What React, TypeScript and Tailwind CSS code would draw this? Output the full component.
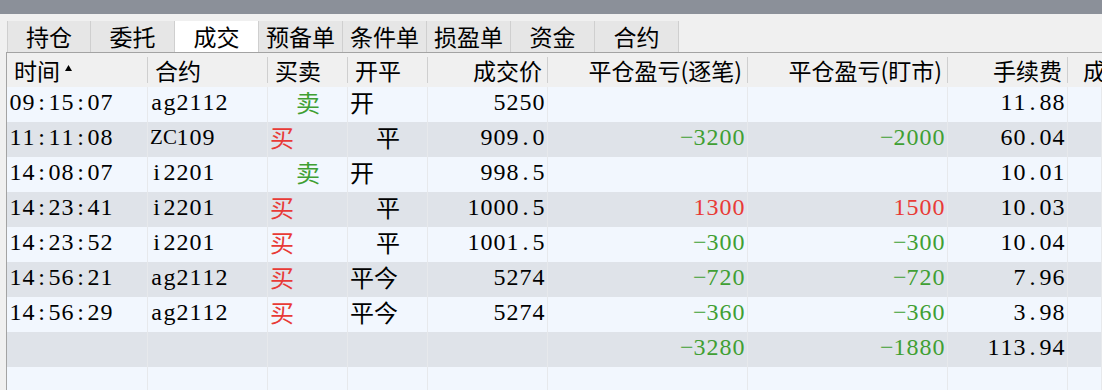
import React from 'react';

type Side = 'buy' | 'sell';

interface Trade {
  time: string;
  symbol: string;
  side: Side;
  offset: string;
  price: string;
  pnlTrade: string;
  pnlMarket: string;
  fee: string;
}

const TRADES: Trade[] = [
  { time: '09:15:07', symbol: 'ag2112', side: 'sell', offset: '开', price: '5250', pnlTrade: '', pnlMarket: '', fee: '11.88' },
  { time: '11:11:08', symbol: 'ZC109', side: 'buy', offset: '  平', price: '909.0', pnlTrade: '-3200', pnlMarket: '-2000', fee: '60.04' },
  { time: '14:08:07', symbol: 'i2201', side: 'sell', offset: '开', price: '998.5', pnlTrade: '', pnlMarket: '', fee: '10.01' },
  { time: '14:23:41', symbol: 'i2201', side: 'buy', offset: '  平', price: '1000.5', pnlTrade: '1300', pnlMarket: '1500', fee: '10.03' },
  { time: '14:23:52', symbol: 'i2201', side: 'buy', offset: '  平', price: '1001.5', pnlTrade: '-300', pnlMarket: '-300', fee: '10.04' },
  { time: '14:56:21', symbol: 'ag2112', side: 'buy', offset: '平今', price: '5274', pnlTrade: '-720', pnlMarket: '-720', fee: '7.96' },
  { time: '14:56:29', symbol: 'ag2112', side: 'buy', offset: '平今', price: '5274', pnlTrade: '-360', pnlMarket: '-360', fee: '3.98' },
];

const TABS = ['持仓', '委托', '成交', '预备单', '条件单', '损盈单', '资金', '合约'];
const ACTIVE_TAB = '成交';

const GRID = 'grid grid-cols-[141px_120px_80px_80px_120px_200px_200px_120px_1fr]';

// half-width glyphs sit in fixed cells, like the terminal's monospace font
function Txt({ s }: { s: string }) {
  return (
    <>
      {Array.from(s).map((c, i) => {
        if (c.charCodeAt(0) >= 128 || c === '(' || c === ')') return <span key={i}>{c}</span>;
        const upper = c >= 'A' && c <= 'Z';
        return (
          <span
            key={i}
            className={`inline-block w-[13px] text-center font-['Liberation_Serif',serif] ${upper ? 'text-[21px]' : 'text-[24px]'}`}
          >
            {c === '-' ? '−' : c === ' ' ? '\u00a0' : c}
          </span>
        );
      })}
    </>
  );
}

function pnlColor(v: string) {
  if (!v) return 'text-black';
  return v.startsWith('-') ? 'text-[#3f9f33]' : 'text-[#e83a36]';
}

function HeadCell({ label, right, sort }: { label: string; right?: boolean; sort?: boolean }) {
  return (
    <div className="h-[34px] py-[4px]">
      <div
        className={`h-full border-r border-[#cfcfcf] flex items-center px-[7px] leading-none whitespace-nowrap ${
          right ? 'justify-end pr-[5px]' : 'justify-start'
        }`}
      >
        <Txt s={label} />
        {sort && (
          <svg width="7" height="6" viewBox="0 0 7 6" className="ml-[5px] mb-[4px]">
            <path d="M3.5 0 L7 6 L0 6 Z" fill="#000" />
          </svg>
        )}
      </div>
    </div>
  );
}

function Cell({ children, right, color }: { children?: React.ReactNode; right?: boolean; color?: string }) {
  return (
    <div
      className={`h-[35px] border-r border-[#e7e9ec] flex items-start leading-[30px] text-[24px] whitespace-nowrap ${
        right ? 'justify-end pr-[2px]' : 'justify-start pl-[2px]'
      } ${color ?? 'text-black'}`}
    >
      {children}
    </div>
  );
}

export default function App() {
  return (
    <div className="w-[1102px] h-[390px] overflow-hidden bg-[#f0f0f0] font-['Noto_Sans_CJK_SC',sans-serif] text-[23px] text-black">
      <div className="h-[14px] bg-[#8b9099]" />

      {/* tab strip */}
      <div className="mt-[7px] pl-[7px] flex h-[31px]">
        {TABS.map((t, i) => (
          <div
            key={t}
            className={`w-[84px] flex items-center justify-center border-r border-[#cfcfcf] ${
              i === 0 ? 'border-l' : ''
            } ${t === ACTIVE_TAB ? 'bg-white' : 'bg-[#e6e6e6]'}`}
          >
            {t}
          </div>
        ))}
      </div>

      {/* trade grid */}
      <div className="ml-[6px] border-l border-t border-[#a3a3a3]">
        <div className={`${GRID} bg-[#f0f0f0]`}>
          <HeadCell label="时间" sort />
          <HeadCell label="合约" />
          <HeadCell label="买卖" />
          <HeadCell label="开平" />
          <HeadCell label="成交价" right />
          <HeadCell label="平仓盈亏(逐笔)" right />
          <HeadCell label="平仓盈亏(盯市)" right />
          <HeadCell label="手续费" right />
          <div className="h-[34px] flex items-center pl-[15px] leading-none whitespace-nowrap">成</div>
        </div>

        {TRADES.map((r, i) => (
          <div key={i} className={`${GRID} ${i % 2 === 0 ? 'bg-[#f2f7fe]' : 'bg-[#dfe3e9]'}`}>
            <Cell><Txt s={r.time} /></Cell>
            <Cell><Txt s={r.symbol} /></Cell>
            <Cell color={r.side === 'buy' ? 'text-[#e83a36]' : 'text-[#3f9f33]'}>
              <Txt s={r.side === 'buy' ? '买' : '  卖'} />
            </Cell>
            <Cell><Txt s={r.offset} /></Cell>
            <Cell right><Txt s={r.price} /></Cell>
            <Cell right color={pnlColor(r.pnlTrade)}><Txt s={r.pnlTrade} /></Cell>
            <Cell right color={pnlColor(r.pnlMarket)}><Txt s={r.pnlMarket} /></Cell>
            <Cell right><Txt s={r.fee} /></Cell>
            <Cell />
          </div>
        ))}

        {/* totals */}
        <div className={`${GRID} bg-[#dfe3e9]`}>
          <Cell />
          <Cell />
          <Cell />
          <Cell />
          <Cell />
          <Cell right color="text-[#3f9f33]"><Txt s="-3280" /></Cell>
          <Cell right color="text-[#3f9f33]"><Txt s="-1880" /></Cell>
          <Cell right><Txt s="113.94" /></Cell>
          <Cell />
        </div>
        <div className={`${GRID} bg-[#f2f7fe]`}>
          {Array.from({ length: 9 }).map((_, i) => (
            <Cell key={i} />
          ))}
        </div>
      </div>
    </div>
  );
}
